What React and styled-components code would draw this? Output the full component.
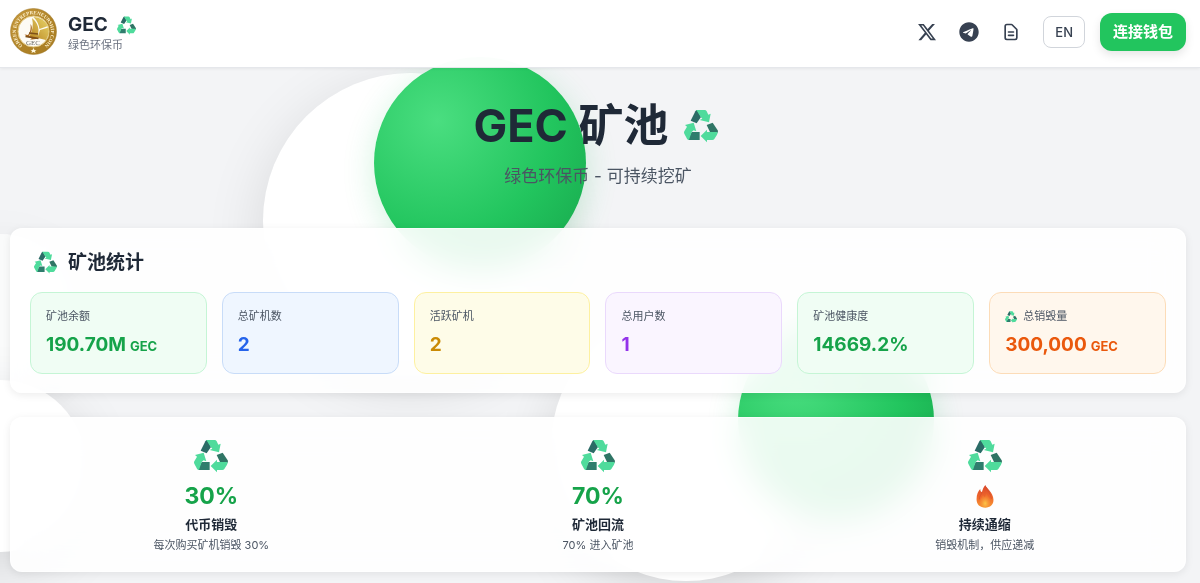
import React from 'react';
import styled, { createGlobalStyle } from 'styled-components';
import { FaTelegram, FaXTwitter } from 'react-icons/fa6';

const stats = [
  { label: '矿池余额', value: '190.70M', unit: 'GEC', tone: 'green' },
  { label: '总矿机数', value: '2', tone: 'blue' },
  { label: '活跃矿机', value: '2', tone: 'yellow' },
  { label: '总用户数', value: '1', tone: 'purple' },
  { label: '矿池健康度', value: '14669.2%', tone: 'green' },
  { label: '总销毁量', value: '300,000', unit: 'GEC', tone: 'orange', icon: true },
];

const features = [
  { figure: '30%', title: '代币销毁', text: '每次购买矿机销毁 30%' },
  { figure: '70%', title: '矿池回流', text: '70% 进入矿池' },
  { figure: <Flame />, title: '持续通缩', text: '销毁机制，供应递减' },
];

const orbs = [
  { x: 411, y: 221, r: 148 },
  { x: 480, y: 163, r: 106, green: true },
  { x: 0, y: 310, r: 76, faint: true },
  { x: 0, y: 466, r: 86 },
  { x: 686, y: 446, r: 135 },
  { x: 836, y: 420, r: 98, green: true },
];

const tones = {
  green: { text: '#16a34a', background: '#f0fdf4', border: '#c5f5d5' },
  blue: { text: '#2563eb', background: '#eff6ff', border: '#c8dcf8' },
  yellow: { text: '#ca8a04', background: '#fefce8', border: '#fdf0a0' },
  purple: { text: '#9333ea', background: '#faf5ff', border: '#ead9fc' },
  orange: { text: '#ea580c', background: '#fff7ed', border: '#fcdcb8' },
};

function Recycle({ size }) {
  return (
    <RecycleSvg viewBox="0 0 102 98" width={size} height={size} aria-hidden="true">
      <path fill="#2b6b66" d="M20 33 34 5Q36 1 40 1L51 22 38 41Z" />
      <path fill="#4fdb9c" d="M37 1H62Q66 1 68 5L73 15 80 12 75 38 47 31 55 27 50 22Z" />
      <path fill="#2f7565" d="M68 46 86 39 101 62Q103 66 100 70L78 67Z" />
      <path fill="#4fdb9c" d="M50 79 69 60V67H100Q102 70 99 75L91 88Q89 91 85 91H69V98Z" />
      <path fill="#2f7d6d" d="M23 67H47V91H15Q11 90 13 87Z" />
      <path fill="#4fdb9c" d="M3 46 29 39 37 65 29 62 23 67 15 91Q11 91 9 87L1 72Q-1 68 1 65L9 51Z" />
    </RecycleSvg>
  );
}

function Flame() {
  return (
    <FlameSvg viewBox="0 0 52 68" aria-hidden="true">
      <defs>
        <linearGradient id="flame" x1="0" y1="0" x2="0" y2="1">
          <stop offset="0" stopColor="#d9472b" />
          <stop offset="0.55" stopColor="#f0682b" />
          <stop offset="1" stopColor="#f79a34" />
        </linearGradient>
        <radialGradient id="flameCore" cx="0.5" cy="0.75" r="0.6">
          <stop offset="0" stopColor="#fdc648" />
          <stop offset="1" stopColor="#f5812f" stopOpacity="0.3" />
        </radialGradient>
      </defs>
      <path fill="url(#flame)" d="M27 0C31 11 50 22 51 43C52 58 41 67 27 67C11 67 1 57 1 42C1 27 6 18 12 12C12 18 14 20 17 21C19 14 21 7 27 0Z" />
      <path fill="url(#flameCore)" d="M29 22C31 31 42 36 42 49C42 60 35 65 27 65C17 65 11 58 11 49C11 40 18 37 19 30C22 31 24 33 25 36C28 32 29 27 29 22Z" />
      <path fill="none" stroke="#d4502c" strokeWidth="2" d="M17 21C15 29 9 33 9 43M29 6C32 17 44 25 45 41" />
    </FlameSvg>
  );
}

const Coin = () => (
  <CoinSvg viewBox="0 0 94 94" role="img" aria-label="Green Entrepreneurship Coin">
    <defs>
      <linearGradient id="gold" x1="0" y1="0" x2="1" y2="1">
        <stop offset="0" stopColor="#c79a3e" />
        <stop offset="0.5" stopColor="#b08428" />
        <stop offset="1" stopColor="#a87c22" />
      </linearGradient>
      <linearGradient id="sail" x1="0" y1="1" x2="1" y2="0">
        <stop offset="0" stopColor="#b98522" />
        <stop offset="1" stopColor="#e9d66b" />
      </linearGradient>
      <path id="coinArc" d="M24 74A35 35 0 1 1 70 74" />
    </defs>
    <circle cx="47" cy="47" r="46" fill="url(#gold)" stroke="#9c7523" strokeWidth="1" />
    <circle cx="47" cy="47" r="31" fill="#fdfbf4" stroke="#e2c880" strokeWidth="2" />
    <CoinText><textPath href="#coinArc" startOffset="50%">GREEN ENTREPRENEURSHIP COIN</textPath></CoinText>
    <path fill="url(#sail)" d="M47 18Q67 19 76 36L59 42Q57 28 47 18ZM60 44 77 39Q79 53 72 64L55 60ZM44 20Q56 30 57 44L56 58H38Q49 40 44 20Z" />
    <path fill="#a8661b" d="M41 32Q46 39 42 48L38 56 57 59Q52 64 40 63L44 60Q34 59 29 53L36 54Q43 46 41 32Z" />
    <path fill="none" stroke="#7d5018" strokeWidth="3" d="M31 57 57 61M38 50 56 52" />
    <CoinName x="46" y="74">GEC</CoinName>
    <path fill="#fff8df" d="m47 80 2 4h4l-3 2 1 4-4-2-4 2 1-4-3-2h4z" />
  </CoinSvg>
);

const Stat = ({ label, value, unit, tone, icon }) => (
  <StatBox $tone={tones[tone]}>
    <StatLabel>
      {icon && <Recycle size={12} />}
      {label}
    </StatLabel>
    <StatValue>
      {value}
      {unit && <StatUnit>{unit}</StatUnit>}
    </StatValue>
  </StatBox>
);

const App = () => (
  <>
    <GlobalStyle />
    <Backdrop aria-hidden="true">
      {orbs.map((orb) => (
        <Orb key={`${orb.x}-${orb.y}`} $x={orb.x} $y={orb.y} $r={orb.r} $green={orb.green} $faint={orb.faint} />
      ))}
    </Backdrop>
    <Header>
      <Brand>
        <Coin />
        <BrandText>
          <BrandName>
            GEC
            <Recycle size={19} />
          </BrandName>
          <BrandTagline>绿色环保币</BrandTagline>
        </BrandText>
      </Brand>
      <Actions>
        <Social>
          <IconLink href="#x" aria-label="X"><FaXTwitter /></IconLink>
          <IconLink href="#telegram" aria-label="Telegram"><FaTelegram /></IconLink>
          <IconLink href="#docs" aria-label="文档">
            <svg viewBox="0 0 24 24" fill="none" stroke="currentColor" strokeWidth="2" strokeLinecap="round" strokeLinejoin="round">
              <path d="M9 12h6m-6 4h6m2 5H7a2 2 0 01-2-2V5a2 2 0 012-2h5.586a1 1 0 01.707.293l5.414 5.414a1 1 0 01.293.707V19a2 2 0 01-2 2z" />
            </svg>
          </IconLink>
        </Social>
        <LanguageButton type="button">EN</LanguageButton>
        <ConnectButton type="button">连接钱包</ConnectButton>
      </Actions>
    </Header>
    <Main>
      <Hero>
        <HeroTitle>
          GEC 矿池
          <Recycle size={34} />
        </HeroTitle>
        <HeroText>绿色环保币 - 可持续挖矿</HeroText>
      </Hero>
      <Card>
        <CardTitle>
          <Recycle size={23} />
          矿池统计
        </CardTitle>
        <StatGrid>
          {stats.map((stat) => <Stat key={stat.label} {...stat} />)}
        </StatGrid>
      </Card>
      <Card>
        <FeatureGrid>
          {features.map(({ figure, title, text }) => (
            <Feature key={title}>
              <Recycle size={34} />
              <FeatureFigure>{figure}</FeatureFigure>
              <FeatureTitle>{title}</FeatureTitle>
              <FeatureText>{text}</FeatureText>
            </Feature>
          ))}
        </FeatureGrid>
      </Card>
    </Main>
  </>
);

const GlobalStyle = createGlobalStyle`
  * {
    box-sizing: border-box;
  }

  body {
    margin: 0;
    background: #f3f4f6;
    color: #1f2937;
    font-family: Inter, "Noto Sans CJK SC", sans-serif;
  }

  h1, h2, h3, p {
    margin: 0;
  }

  button {
    font-family: inherit;
    cursor: pointer;
  }
`;

const RecycleSvg = styled.svg`
  display: block;
  flex: none;
`;

const FlameSvg = styled.svg`
  width: 18px;
  height: 23px;
`;

const CoinSvg = styled.svg`
  width: 47px;
  height: 47px;
`;

const CoinText = styled.text`
  fill: #fff3cf;
  font-size: 10px;
  font-weight: 700;
  font-family: "Liberation Serif", serif;
  text-anchor: middle;
`;

const CoinName = styled.text`
  fill: #6b6b66;
  font-size: 14px;
  font-family: "Liberation Serif", serif;
  text-anchor: middle;
`;

const Backdrop = styled.div`
  position: fixed;
  inset: 0;
  overflow: hidden;
`;

const Orb = styled.div`
  position: absolute;
  left: ${({ $x, $r }) => $x - $r}px;
  top: ${({ $y, $r }) => $y - $r}px;
  width: ${({ $r }) => $r * 2}px;
  height: ${({ $r }) => $r * 2}px;
  border-radius: 50%;
  opacity: ${({ $faint }) => ($faint ? 0.6 : 1)};
  background: ${({ $green }) => ($green
    ? 'radial-gradient(circle at 30% 30%, #4ade80, #22c55e 55%, #16a34a)'
    : '#fff')};
  box-shadow: ${({ $green }) => ($green
    ? '0 8px 32px rgba(34, 197, 94, 0.2)'
    : '0 16px 60px rgba(0, 0, 0, 0.12)')};
`;

const Header = styled.header`
  position: sticky;
  top: 0;
  z-index: 1;
  display: flex;
  align-items: center;
  justify-content: space-between;
  padding: 8px 14px 12px 10px;
  border-bottom: 1px solid #e5e7eb;
  background: rgba(255, 255, 255, 0.98);
  box-shadow: 0 1px 3px rgba(0, 0, 0, 0.06);
`;

const Brand = styled.div`
  display: flex;
  align-items: center;
  gap: 11px;
`;

const BrandText = styled.div`
  padding-top: 3px;
`;

const BrandName = styled.div`
  display: flex;
  align-items: center;
  gap: 9px;
  font-size: 19px;
  font-weight: 700;
  line-height: 24px;
`;

const BrandTagline = styled.p`
  color: #6b7280;
  font-size: 11px;
  line-height: 16px;
`;

const Actions = styled.div`
  display: flex;
  align-items: center;
  gap: 15px;
`;

const Social = styled.nav`
  display: flex;
  gap: 8px;
`;

const IconLink = styled.a`
  display: flex;
  padding: 7px;
  color: #374151;

  svg {
    width: 20px;
    height: 20px;
  }
`;

const LanguageButton = styled.button`
  padding: 0 11px;
  border: 1px solid #d1d5db;
  border-radius: 8px;
  background: #fff;
  color: #374151;
  font-size: 13px;
  font-weight: 500;
  line-height: 30px;
`;

const ConnectButton = styled.button`
  padding: 0 13px;
  border: 0;
  border-radius: 12px;
  background: #22c55e;
  box-shadow: 0 4px 10px rgba(0, 0, 0, 0.1);
  color: #fff;
  font-size: 15px;
  font-weight: 700;
  line-height: 38px;
`;

const Main = styled.main`
  position: relative;
  display: flex;
  flex-direction: column;
  gap: 24px;
  padding: 30px 14px 11px 10px;
`;

const Hero = styled.section`
  padding-bottom: 14px;
  text-align: center;
`;

const HeroTitle = styled.h1`
  display: flex;
  align-items: center;
  justify-content: center;
  gap: 15px;
  padding-right: 5px;
  font-size: 45px;
  font-weight: 700;
  line-height: 56px;
`;

const HeroText = styled.p`
  padding-top: 8px;
  color: #4b5563;
  font-size: 17px;
  line-height: 28px;
`;

const Card = styled.section`
  padding: 19px 19px 18px;
  border: 1px solid rgba(255, 255, 255, 0.6);
  border-radius: 12px;
  background: rgba(255, 255, 255, 0.9);
  backdrop-filter: blur(16px);
  box-shadow: 0 2px 8px rgba(0, 0, 0, 0.08);
`;

const CardTitle = styled.h2`
  display: flex;
  align-items: center;
  gap: 11px;
  padding: 0 4px 15px;
  font-size: 19px;
  font-weight: 700;
  line-height: 29px;
`;

const StatGrid = styled.div`
  display: grid;
  grid-template-columns: repeat(6, 1fr);
  gap: 15px;

  @media (max-width: 900px) {
    grid-template-columns: repeat(2, 1fr);
  }
`;

const StatBox = styled.div`
  padding: 16px 15px 14px;
  border: 1px solid ${({ $tone }) => $tone.border};
  border-radius: 12px;
  background: ${({ $tone }) => $tone.background};
  color: ${({ $tone }) => $tone.text};
`;

const StatLabel = styled.div`
  display: flex;
  align-items: center;
  gap: 6px;
  color: #4b5563;
  font-size: 11px;
  line-height: 15px;
`;

const StatValue = styled.div`
  padding-top: 8px;
  font-size: 19px;
  font-weight: 700;
  line-height: 26px;
`;

const StatUnit = styled.span`
  padding-left: 4px;
  font-size: 13px;
`;

const FeatureGrid = styled.div`
  display: grid;
  grid-template-columns: repeat(3, 1fr);
  gap: 24px;
`;

const Feature = styled.div`
  display: flex;
  flex-direction: column;
  align-items: center;
  padding-top: 2px;
  text-align: center;
`;

const FeatureFigure = styled.div`
  display: flex;
  align-items: center;
  height: 30px;
  margin-top: 8px;
  color: #16a34a;
  font-size: 23px;
  font-weight: 700;
`;

const FeatureTitle = styled.h3`
  padding-top: 4px;
  font-size: 13px;
  font-weight: 700;
  line-height: 18px;
`;

const FeatureText = styled.p`
  padding-top: 5px;
  color: #4b5563;
  font-size: 11px;
  line-height: 15px;
`;

export default App;
